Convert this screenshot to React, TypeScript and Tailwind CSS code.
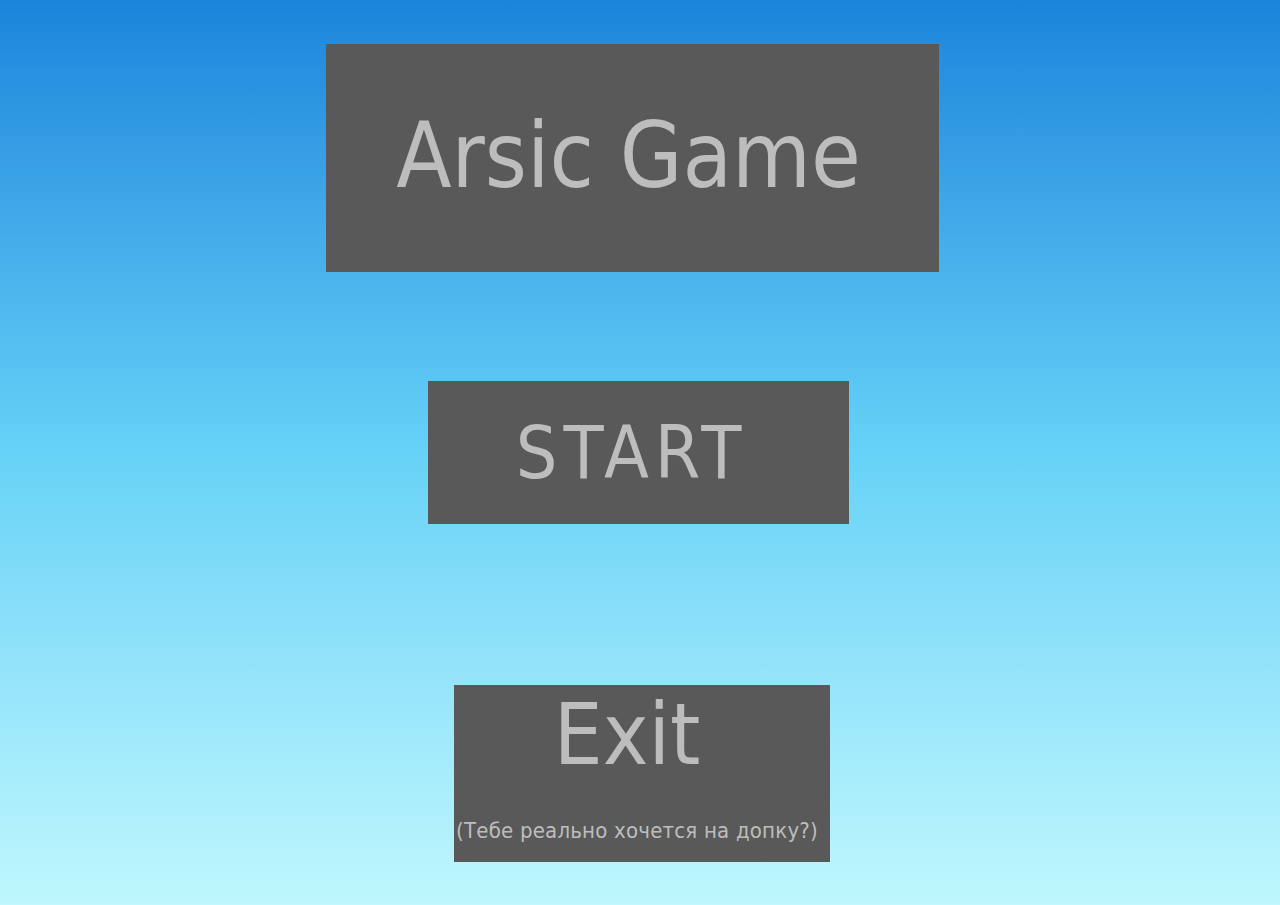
export default function App() {
  return (
    <div
      className="flex h-[905px] w-[1280px] flex-col bg-gradient-to-b from-[#1a84db] via-[#66d2f7] to-[#bff7fd] text-[#bdbdbd]"
      style={{ fontFamily: '"DejaVu Sans Condensed", "DejaVu Sans", Tahoma, sans-serif' }}
    >
      <div className="ml-[326px] mt-[44px] flex h-[228px] w-[613px] items-center justify-center bg-[#595959] pr-[8px] pb-[4px]">
        <h1 className="text-[90px] leading-none">Arsic Game</h1>
      </div>

      <button className="ml-[428px] mt-[109px] flex h-[143px] w-[421px] items-center justify-center bg-[#595959] pr-[14px]">
        <span className="text-[73px] leading-none tracking-[6px]">START</span>
      </button>

      <button className="ml-[454px] mt-[161px] flex h-[177px] w-[376px] flex-col items-center bg-[#595959]">
        <span className="mt-[6px] pr-[30px] text-[86px] leading-none">Exit</span>
        <span className="mt-[43px] pr-[10px] text-[22px] leading-none tracking-[0.2px]">(Тебе реально хочется на допку?)</span>
      </button>
    </div>
  );
}
